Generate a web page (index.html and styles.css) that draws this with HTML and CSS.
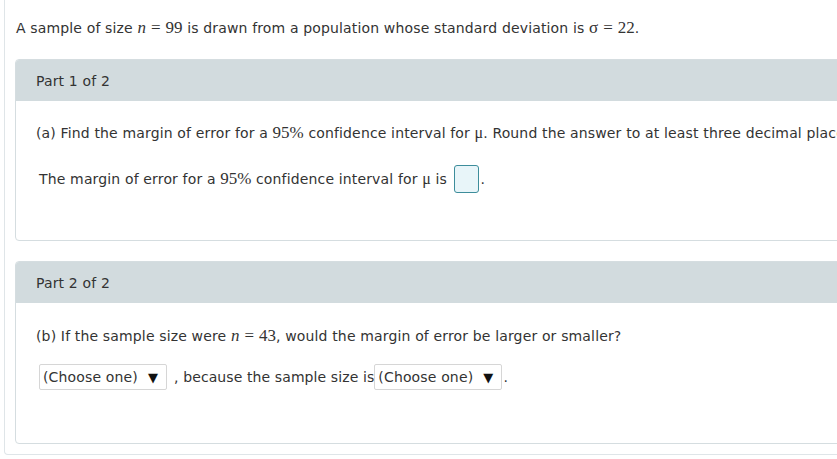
FILE: index.html
```html
<!DOCTYPE html>
<html>
<head>
<meta charset="utf-8">
<link rel="stylesheet" href="styles.css">
</head>
<body>
<div class="outer">
  <p class="intro">A sample of size <span class="m"><i>n</i><span class="rel">=</span>99</span> is drawn from a population whose standard deviation is <span class="m">σ<span class="rel">=</span>22</span>.</p>

  <section class="card">
    <div class="card-head">Part 1 of 2</div>
    <div class="card-body body1">
      <p class="q">(a) Find the margin of error for a <span class="m">95%</span> confidence interval for <span class="m mu">μ</span>. Round the answer to at least three decimal places.</p>
      <p class="a">The margin of error for a <span class="m">95%</span> confidence interval for <span class="m mu">μ</span> is <span class="box"></span>.</p>
    </div>
  </section>

  <section class="card">
    <div class="card-head">Part 2 of 2</div>
    <div class="card-body body2">
      <p class="q">(b) If the sample size were <span class="m"><i>n</i><span class="rel">=</span>43</span>, would the margin of error be larger or smaller?</p>
      <p class="a sel-row"><span class="sel">(Choose one)<span class="tri">▼</span></span><span class="txt">, because the sample size is</span><span class="sel">(Choose one)<span class="tri">▼</span></span><span class="dot">.</span></p>
    </div>
  </section>
</div>
</body>
</html>
```

FILE: styles.css
```css
html, body {
  margin: 0;
  padding: 0;
  background: #fff;
  overflow: hidden;
}
body {
  font-family: "DejaVu Sans", Verdana, sans-serif;
  font-size: 14px;
  letter-spacing: 0.15px;
  color: #333;
}
.outer {
  margin-left: 4px;
  width: 1000px;
  border: 1px solid #dfe5e8;
  border-top: none;
  border-radius: 0 0 4px 4px;
  padding: 0 0 10px 10px;
}
p { margin: 0; }
.intro {
  margin-left: 1px;
  padding-top: 18px;
  line-height: 20px;
  white-space: nowrap;
}
.m {
  font-family: "Liberation Serif", "Times New Roman", serif;
  font-size: 17px;
  letter-spacing: 0;
}
.m i { font-style: italic; }
.rel { margin: 0 5px; }
.mu { font-size: 16px; }
.card {
  border: 1px solid #d5dde0;
  border-radius: 4px;
  overflow: hidden;
}
.intro + .card { margin-top: 21px; }
.card + .card { margin-top: 20px; }
.card-head {
  background: #d2dbde;
  height: 39px;
  padding-top: 2px;
  line-height: 39px;
  padding-left: 20px;
}
.card-body {
  padding-left: 20px;
  white-space: nowrap;
}
.body1 { height: 139px; }
.body2 { height: 140px; }
.q {
  padding-top: 22px;
  line-height: 20px;
}
.body2 .q { padding-top: 23px; }
.a {
  margin-left: 3px;
  margin-top: 22px;
  line-height: 28px;
  height: 30px;
}
.box {
  display: inline-block;
  vertical-align: middle;
  width: 23px;
  height: 26px;
  border: 1px solid #3d8d9b;
  border-radius: 3px;
  background: #e8f5f9;
  margin: -3px 2px 0 2px;
}
.sel-row { margin-top: 17px; }
.sel {
  display: inline-block;
  vertical-align: middle;
  height: 24px;
  line-height: 24px;
  border: 1px solid #d6d6d6;
  border-radius: 2px;
  padding: 0 8px 0 3px;
  color: #333;
  background: #fff;
  margin-top: -3px;
}
.tri {
  font-size: 13px;
  margin-left: 10px;
  color: #111;
}
.txt { margin: 0 0 0 7px; letter-spacing: 0.1px; }
.dot { margin-left: 1px; }
```
